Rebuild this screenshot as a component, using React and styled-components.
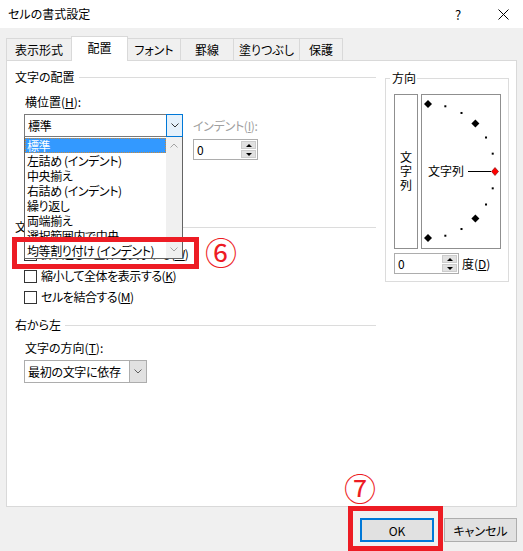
import React from 'react';
import styled, { createGlobalStyle } from 'styled-components';

const GlobalStyle = createGlobalStyle`
  html, body {
    margin: 0;
    padding: 0;
    background: #f0f0f0;
  }
  body {
    font-family: "Noto Sans CJK JP", "Noto Sans", sans-serif;
    font-size: 12px;
    color: #000;
    font-feature-settings: "palt";
  }
`;

const Dialog = styled.div`
  position: relative;
  width: 523px;
  height: 551px;
  background: #f0f0f0;
  overflow: hidden;
  display: flex;
  flex-direction: column;
`;

const TitleBar = styled.div`
  height: 28px;
  background: #fff;
  display: flex;
  align-items: center;
`;

const Title = styled.div`
  flex: 1;
  padding-left: 8px;
  line-height: 16px;
`;

const TitleButton = styled.div`
  width: 40px;
  height: 28px;
  display: flex;
  align-items: center;
  justify-content: center;
  font-size: 13px;
  margin-right: ${p => p.$gap || 0}px;
`;

const TabStrip = styled.div`
  position: relative;
  z-index: 1;
  height: 24px;
  margin-top: 8px;
  padding-left: 6px;
  display: flex;
  align-items: flex-end;
`;

const Tab = styled.div`
  box-sizing: border-box;
  width: ${p => p.$w}px;
  height: ${p => (p.$active ? 25 : 22)}px;
  margin-bottom: ${p => (p.$active ? -1 : 0)}px;
  margin-left: -1px;
  &:first-child {
    margin-left: 0;
  }
  border: 1px solid #d9d9d9;
  border-bottom: none;
  background: ${p => (p.$active ? '#fff' : '#f0f0f0')};
  display: flex;
  align-items: center;
  justify-content: center;
  padding-bottom: ${p => (p.$active ? 2 : 0)}px;
  line-height: 16px;
`;

const Panel = styled.div`
  position: relative;
  box-sizing: border-box;
  margin-left: 6px;
  width: 511px;
  height: 447px;
  background: #fff;
  border: 1px solid #d9d9d9;
  padding: 8px 6px 0 8px;
  display: flex;
  align-items: flex-start;
`;

const LeftColumn = styled.div`
  width: 361px;
  display: flex;
  flex-direction: column;
`;

const GroupHeader = styled.div`
  display: flex;
  align-items: center;
  height: 16px;
  line-height: 16px;
  margin-top: ${p => p.$mt || 0}px;
  &::after {
    content: '';
    flex: 1;
    height: 1px;
    background: #dcdcdc;
    margin-left: 4px;
  }
`;

const FieldLabel = styled.div`
  height: 16px;
  line-height: 16px;
  padding-left: 10px;
  margin-top: ${p => p.$mt || 0}px;
  color: ${p => (p.$disabled ? '#a0a0a0' : '#000')};
`;

const Row = styled.div`
  display: flex;
  align-items: flex-start;
  gap: 10px;
  margin-left: 9px;
  margin-top: ${p => p.$mt || 0}px;
`;

const ComboWrap = styled.div`
  position: relative;
  margin-left: ${p => p.$ml || 0}px;
  margin-top: ${p => p.$mt || 0}px;
  width: ${p => p.$w}px;
`;

const Combo = styled.div`
  box-sizing: border-box;
  width: 100%;
  height: 23px;
  display: flex;
  border: 1px solid ${p => (p.$open ? '#7a7a7a' : '#adadad')};
  background: #fff;
`;

const ComboText = styled.div`
  flex: 1;
  padding-left: 3px;
  line-height: 21px;
  white-space: nowrap;
  overflow: hidden;
  letter-spacing: -0.3px;
`;

const ComboButton = styled.div`
  box-sizing: border-box;
  width: 17px;
  margin: ${p => (p.$open ? '-1px -1px -1px 0' : '0')};
  height: ${p => (p.$open ? 23 : 21)}px;
  display: flex;
  align-items: center;
  justify-content: center;
  background: ${p => (p.$open ? '#e5f1fb' : '#e1e1e1')};
  border: ${p => (p.$open ? '1px solid #0078d7' : 'none')};
  border-left: 1px solid ${p => (p.$open ? '#0078d7' : '#adadad')};
`;

const DropList = styled.div`
  position: absolute;
  z-index: 2;
  top: 100%;
  left: 0;
  box-sizing: border-box;
  width: 100%;
  border: 1px solid #646464;
  border-top: none;
  background: #fff;
  display: flex;
`;

const ListItems = styled.div`
  flex: 1;
  padding-top: 1px;
`;

const ListItem = styled.div`
  height: 15px;
  line-height: 15px;
  padding-left: 2px;
  white-space: nowrap;
  letter-spacing: -0.4px;
  background: ${p => (p.$selected ? '#3399ff' : 'transparent')};
  color: ${p => (p.$selected ? '#fff' : '#000')};
  outline: ${p => (p.$selected ? '1px dotted #c98a3c' : 'none')};
  outline-offset: -1px;
`;

const ScrollBar = styled.div`
  width: 16px;
  background: #f0f0f0;
  display: flex;
  flex-direction: column;
  justify-content: space-between;
`;

const ScrollArrow = styled.div`
  height: 17px;
  display: flex;
  align-items: center;
  justify-content: center;
`;

const IndentCol = styled.div`
  display: flex;
  flex-direction: column;
  margin-top: 4px;
  gap: 5px;
`;

const IndentLabel = styled.div`
  line-height: 16px;
  color: #a0a0a0;
  letter-spacing: -0.3px;
`;

const Spinner = styled.div`
  box-sizing: border-box;
  width: 65px;
  height: 21px;
  display: flex;
  border: 1px solid #adadad;
  background: #fff;
`;

const SpinValue = styled.div`
  flex: 1;
  padding-left: 3px;
  line-height: 19px;
`;

const SpinButtons = styled.div`
  width: 15px;
  padding: 1px 1px 1px 0;
  display: flex;
  flex-direction: column;
  gap: 1px;
`;

const SpinHalf = styled.div`
  flex: 1;
  background: #e1e1e1;
  border: 1px solid #cccccc;
  display: flex;
  align-items: center;
  justify-content: center;
  &::before {
    content: '';
    border-left: 3px solid transparent;
    border-right: 3px solid transparent;
    ${p => (p.$down ? 'border-top: 3px solid #000;' : 'border-bottom: 3px solid #000;')}
  }
`;

const CheckRow = styled.div`
  display: flex;
  align-items: center;
  height: 16px;
  line-height: 16px;
  margin-left: 9px;
  margin-top: ${p => p.$mt || 0}px;
  white-space: nowrap;
`;

const CheckBox = styled.span`
  box-sizing: border-box;
  width: 13px;
  height: 13px;
  margin-right: 4px;
  border: 1px solid #333;
  background: #fff;
`;

const CheckLabel = styled.span`
  line-height: 16px;
  letter-spacing: -0.45px;
`;

const OrientGroup = styled.fieldset`
  box-sizing: border-box;
  width: 124px;
  min-width: 0;
  margin: 1px 0 0 9px;
  padding: 8px 6px 7px 8px;
  border: 1px solid #dcdcdc;
`;

const Legend = styled.legend`
  padding: 0 1px 0 2px;
  margin-left: -4px;
  line-height: 16px;
`;

const OrientRow = styled.div`
  display: flex;
  gap: 3px;
`;

const VerticalBox = styled.div`
  box-sizing: border-box;
  width: 24px;
  height: 155px;
  border: 1px solid #8f8f8f;
  display: flex;
  flex-direction: column;
  align-items: center;
  justify-content: center;
  line-height: 14px;
  padding-bottom: 1px;
`;

const DialBox = styled.div`
  box-sizing: border-box;
  width: 80px;
  height: 155px;
  border: 1px solid #8f8f8f;
`;

const DegreeRow = styled.div`
  display: flex;
  align-items: center;
  gap: 3px;
  margin-top: 4px;
  line-height: 16px;
`;

const Footer = styled.div`
  display: flex;
  justify-content: flex-end;
  gap: 10px;
  margin-top: 11px;
  padding-right: 6px;
`;

const Button = styled.div`
  box-sizing: border-box;
  width: ${p => p.$w}px;
  height: 24px;
  background: #e1e1e1;
  border: ${p => (p.$primary ? '2px solid #0078d7' : '1px solid #adadad')};
  display: flex;
  align-items: center;
  justify-content: center;
  font-size: 12px;
`;

const Highlight = styled.div`
  position: absolute;
  z-index: 5;
  box-sizing: border-box;
  border: 5px solid #ed1c24;
  left: ${p => p.$x}px;
  top: ${p => p.$y}px;
  width: ${p => p.$w}px;
  height: ${p => p.$h}px;
`;

const StepMark = styled.span`
  position: absolute;
  z-index: 5;
  left: ${p => p.$x}px;
  top: ${p => p.$y}px;
  font-size: 32px;
  line-height: 32px;
  color: #ed1c24;
  font-feature-settings: normal;
`;

const Chevron = ({ up, color = '#606060' }) => (
  <svg width="8" height="5" viewBox="0 0 8 5">
    <polyline
      points={up ? '0.5,4.5 4,1 7.5,4.5' : '0.5,0.5 4,4 7.5,0.5'}
      fill="none"
      stroke={color}
      strokeWidth="1"
    />
  </svg>
);

const CloseIcon = () => (
  <svg width="11" height="11" viewBox="0 0 11 11">
    <path d="M0.5 0.5 L10.5 10.5 M10.5 0.5 L0.5 10.5" stroke="#000" strokeWidth="1" />
  </svg>
);

const Dial = () => {
  const cx = 6;
  const cy = 76;
  const r = 67;
  const marks = [];
  for (let a = -90; a <= 90; a += 15) {
    const t = (a * Math.PI) / 180;
    const x = cx + r * Math.cos(t);
    const y = cy + r * Math.sin(t);
    if (a === 0) continue;
    if (a % 45 === 0) {
      marks.push(
        <polygon key={a} points={`${x},${y - 4} ${x + 4},${y} ${x},${y + 4} ${x - 4},${y}`} fill="#000" />
      );
    } else {
      marks.push(<rect key={a} x={x - 1} y={y - 1} width="2" height="2" fill="#000" />);
    }
  }
  return (
    <svg width="78" height="153" viewBox="0 0 78 153">
      {marks}
      <text x="6" y="80.5" fontSize="12" fontFamily="Noto Sans CJK JP, sans-serif">文字列</text>
      <line x1="46" y1="76.5" x2="69" y2="76.5" stroke="#000" strokeWidth="1" />
      <polygon points="73,72.5 76.5,76.5 73,80.5 69.5,76.5" fill="#ff0000" stroke="#7a0000" strokeWidth="0.6" />
    </svg>
  );
};

const tabs = [
  { label: '表示形式', w: 66 },
  { label: '配置', w: 57, active: true },
  { label: 'フォント', w: 54 },
  { label: '罫線', w: 54 },
  { label: '塗りつぶし', w: 67 },
  { label: '保護', w: 44 },
];

const horizontalOptions = [
  '標準',
  '左詰め (インデント)',
  '中央揃え',
  '右詰め (インデント)',
  '繰り返し',
  '両端揃え',
  '選択範囲内で中央',
  '均等割り付け (インデント)',
];

const SpinBox = ({ value }) => (
  <Spinner>
    <SpinValue>{value}</SpinValue>
    <SpinButtons>
      <SpinHalf />
      <SpinHalf $down />
    </SpinButtons>
  </Spinner>
);

const Check = ({ mt, children }) => (
  <CheckRow $mt={mt}>
    <CheckBox />
    <CheckLabel>{children}</CheckLabel>
  </CheckRow>
);

export default function App() {
  return (
    <>
      <GlobalStyle />
      <Dialog>
        <TitleBar>
          <Title>セルの書式設定</Title>
          <TitleButton $gap={5}>?</TitleButton>
          <TitleButton>
            <CloseIcon />
          </TitleButton>
        </TitleBar>

        <TabStrip>
          {tabs.map(t => (
            <Tab key={t.label} $w={t.w} $active={t.active}>
              {t.label}
            </Tab>
          ))}
        </TabStrip>

        <Panel>
          <LeftColumn>
            <GroupHeader>文字の配置</GroupHeader>
            <FieldLabel $mt={9}>
              横位置(<u>H</u>):
            </FieldLabel>
            <Row $mt={4}>
              <ComboWrap $w={159}>
                <Combo $open>
                  <ComboText>標準</ComboText>
                  <ComboButton $open>
                    <Chevron color="#333" />
                  </ComboButton>
                </Combo>
                <DropList>
                  <ListItems>
                    {horizontalOptions.map((o, i) => (
                      <ListItem key={o} $selected={i === 0}>
                        {o}
                      </ListItem>
                    ))}
                  </ListItems>
                  <ScrollBar>
                    <ScrollArrow>
                      <Chevron up color="#a3a3a3" />
                    </ScrollArrow>
                    <ScrollArrow>
                      <Chevron color="#a3a3a3" />
                    </ScrollArrow>
                  </ScrollBar>
                </DropList>
              </ComboWrap>
              <IndentCol>
                <IndentLabel>
                  インデント(<u>I</u>):
                </IndentLabel>
                <SpinBox value="0" />
              </IndentCol>
            </Row>
            <FieldLabel $mt={4}>
              縦位置(<u>V</u>):
            </FieldLabel>
            <ComboWrap $w={159} $ml={9}>
              <Combo>
                <ComboText>中央揃え</ComboText>
                <ComboButton>
                  <Chevron />
                </ComboButton>
              </Combo>
            </ComboWrap>

            <GroupHeader $mt={16}>文字の制御</GroupHeader>
            <Check mt={11}>
              折り返して全体を表示する(<u>W</u>)
            </Check>
            <Check mt={6}>
              縮小して全体を表示する(<u>K</u>)
            </Check>
            <Check mt={5}>
              セルを結合する(<u>M</u>)
            </Check>

            <GroupHeader $mt={12}>右から左</GroupHeader>
            <FieldLabel $mt={7}>
              文字の方向(<u>T</u>):
            </FieldLabel>
            <ComboWrap $w={123} $ml={9} $mt={4}>
              <Combo>
                <ComboText>最初の文字に依存</ComboText>
                <ComboButton>
                  <Chevron />
                </ComboButton>
              </Combo>
            </ComboWrap>
          </LeftColumn>

          <OrientGroup>
            <Legend>方向</Legend>
            <OrientRow>
              <VerticalBox>
                <span>文</span>
                <span>字</span>
                <span>列</span>
              </VerticalBox>
              <DialBox>
                <Dial />
              </DialBox>
            </OrientRow>
            <DegreeRow>
              <SpinBox value="0" />
              <span>
                度(<u>D</u>)
              </span>
            </DegreeRow>
          </OrientGroup>

          <Highlight $x={5} $y={176} $w={187} $h={32} />
          <StepMark $x={198} $y={174}>⑥</StepMark>
        </Panel>

        <Footer>
          <Button $w={74} $primary>
            OK
          </Button>
          <Button $w={73}>キャンセル</Button>
        </Footer>

        <Highlight $x={348} $y={506} $w={95} $h={45} />
        <StepMark $x={344} $y={471}>⑦</StepMark>
      </Dialog>
    </>
  );
}
